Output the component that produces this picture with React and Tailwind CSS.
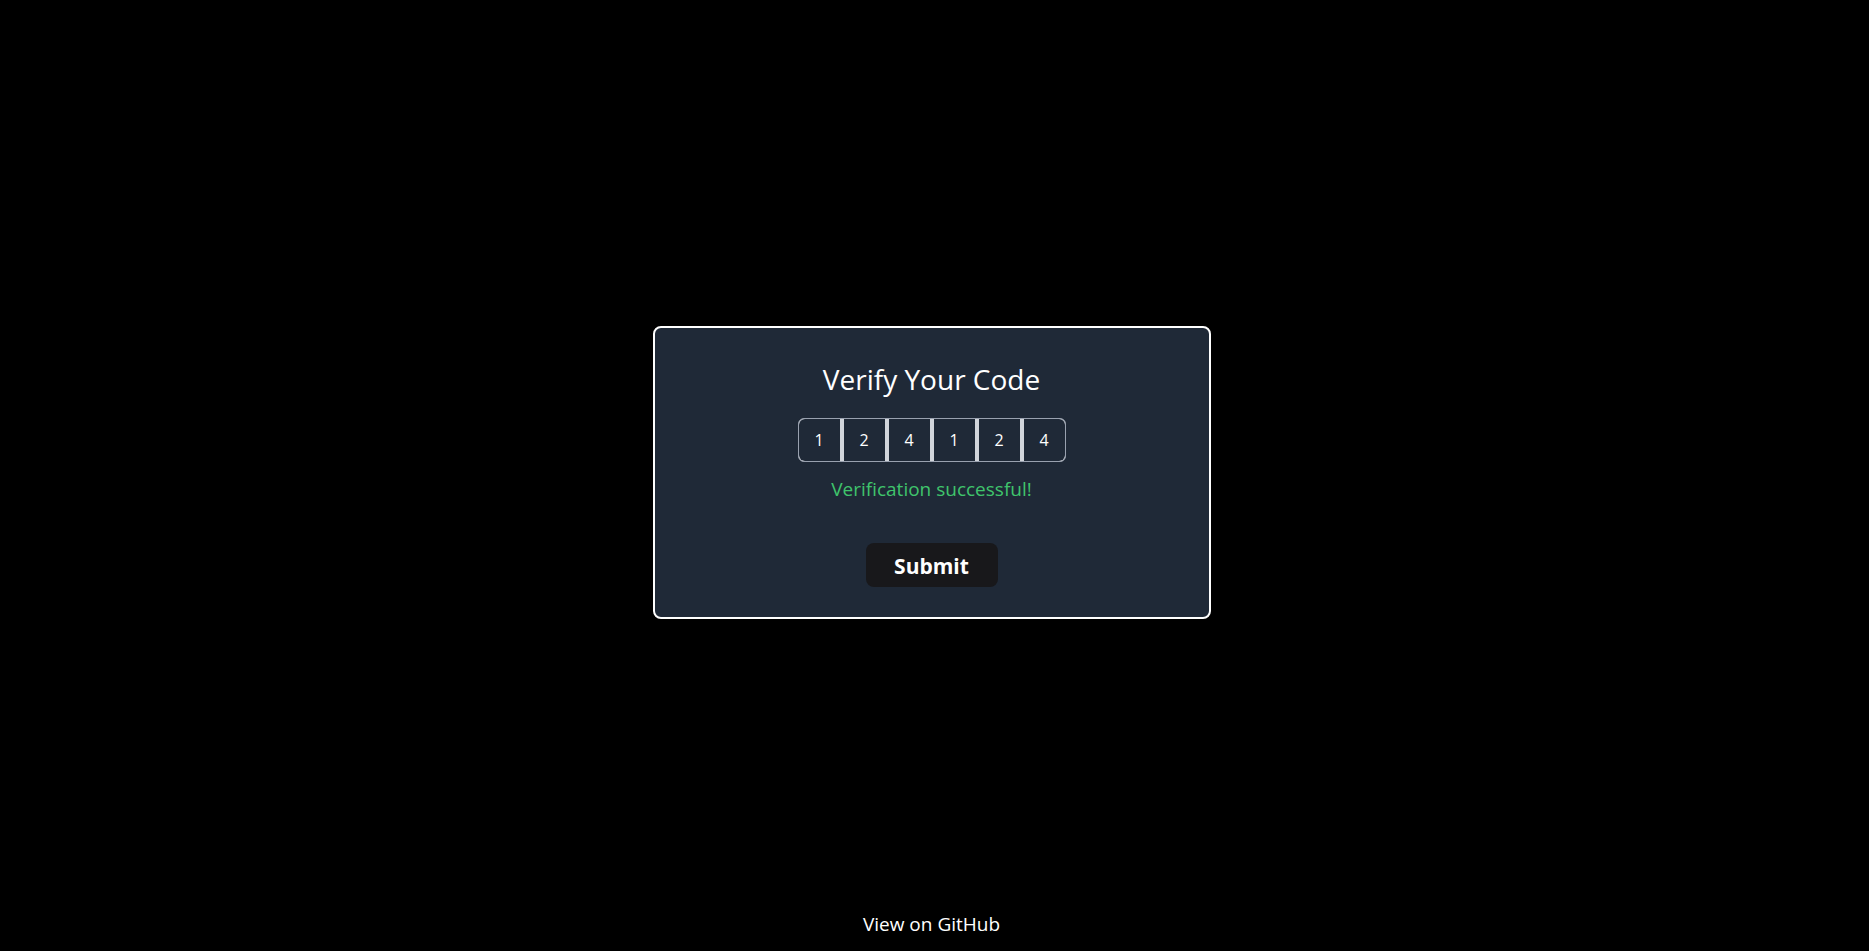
export default function App() {
  const digits = ["1", "2", "4", "1", "2", "4"];
  return (
    <div
      className="h-screen w-full bg-black text-white grid grid-rows-[1fr_auto_1fr] pr-[6px]"
      style={{ fontFamily: "'Open Sans', 'Noto Sans', sans-serif" }}
    >
      <div />
      <div className="flex justify-center">
        <div className="w-[558px] mb-[6px] bg-[#1f2937] border-2 border-white rounded-lg px-8 pt-8 pb-[30px] flex flex-col items-center">
          <h1 className="text-[28px] leading-[36px] font-normal text-white mt-[1px] -mb-[1px]">Verify Your Code</h1>
          <div className="mt-[22px] flex h-[44px] rounded-md border border-gray-400 bg-[#d1d5db] gap-[4px] overflow-hidden">
            {digits.map((d, i) => (
              <div
                key={i}
                className={
                  "w-[41px] h-full bg-[#1f2937] flex items-center justify-center text-[16px] text-white " +
                  (i === 0 ? "rounded-l-md" : i === 5 ? "rounded-r-md" : "")
                }
              >
                {d}
              </div>
            ))}
          </div>
          <p className="mt-[13px] text-[19px] leading-7 text-[#3fc46c]">Verification successful!</p>
          <button className="mt-10 h-[44px] w-[132px] rounded-lg bg-[#18181b] text-white text-[21px] leading-7 font-bold pt-[1px]">
            Submit
          </button>
        </div>
      </div>
      <div className="flex items-end justify-center pb-[13px]">
        <a href="#" className="text-[19px] leading-7 text-white">View on GitHub</a>
      </div>
    </div>
  );
}
